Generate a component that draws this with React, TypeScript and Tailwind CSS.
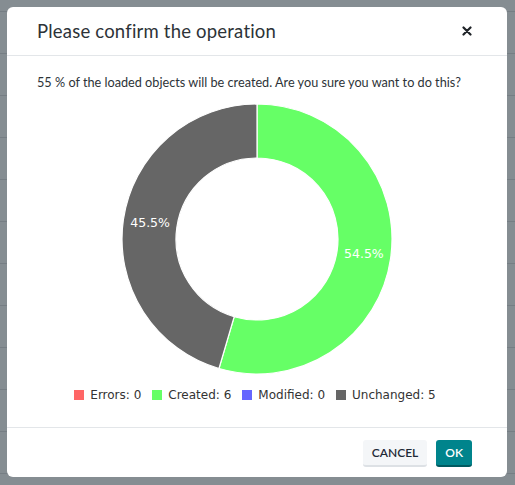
import React from 'react';

const slices = [
  { label: 'Errors', value: 0, color: '#ff6666' },
  { label: 'Created', value: 6, color: '#66ff66' },
  { label: 'Modified', value: 0, color: '#6666ff' },
  { label: 'Unchanged', value: 5, color: '#666666' },
];

function arcPath(cx: number, cy: number, r1: number, r2: number, a0: number, a1: number) {
  const pt = (r: number, a: number) => [cx + r * Math.sin(a), cy - r * Math.cos(a)];
  const large = a1 - a0 > Math.PI ? 1 : 0;
  const [x0, y0] = pt(r2, a0);
  const [x1, y1] = pt(r2, a1);
  const [x2, y2] = pt(r1, a1);
  const [x3, y3] = pt(r1, a0);
  return `M${x0} ${y0} A${r2} ${r2} 0 ${large} 1 ${x1} ${y1} L${x2} ${y2} A${r1} ${r1} 0 ${large} 0 ${x3} ${y3} Z`;
}

function Donut() {
  const total = slices.reduce((s, d) => s + d.value, 0);
  const cx = 136;
  const cy = 136;
  let a = 0;
  const parts = slices
    .filter(d => d.value > 0)
    .map(d => {
      const a0 = a;
      const a1 = a + (d.value / total) * Math.PI * 2;
      a = a1;
      const mid = (a0 + a1) / 2;
      return {
        ...d,
        path: arcPath(cx, cy, 81, 135, a0, a1),
        lx: cx + 108 * Math.sin(mid),
        ly: cy - 108 * Math.cos(mid),
        pct: ((d.value / total) * 100).toFixed(1) + '%',
      };
    });

  return (
    <svg width="272" height="272" viewBox="0 0 272 272">
      {parts.map(p => (
        <path key={p.label} d={p.path} fill={p.color} stroke="#fff" strokeWidth="1.2" />
      ))}
      {parts.map(p => (
        <text
          key={p.label + 't'}
          x={p.lx}
          y={p.ly}
          fill="#fff"
          fontSize="12.5"
          textAnchor="middle"
          dominantBaseline="middle"
          style={{ fontFamily: '"DejaVu Sans", sans-serif' }}
        >
          {p.pct}
        </text>
      ))}
    </svg>
  );
}

export default function App() {
  return (
    <div className="relative w-[515px] h-[485px] overflow-hidden bg-[#858d92]">
      <div className="flex flex-col pt-[11px]">
        {Array.from({ length: 12 }).map((_, i) => (
          <div key={i} className="h-[42px] border-t border-[#767e84]" />
        ))}
      </div>

      <div className="absolute left-[7px] top-[7px] w-[500px] h-[470px] bg-white rounded-[6px] flex flex-col font-['Lato',sans-serif] text-[#2d3338]">
        <div className="h-[49px] flex items-center justify-between pl-[30px] pr-[35px] border-b border-[#e3e6e9]">
          <h2 className="text-[18.5px] tracking-[0.2px] text-[#2d3338] pt-[2px]">Please confirm the operation</h2>
          <svg width="10" height="10" viewBox="0 0 10 10">
            <path d="M1.5 1.5 L8.5 8.5 M8.5 1.5 L1.5 8.5" stroke="#1f2328" strokeWidth="2.2" strokeLinecap="round" />
          </svg>
        </div>

        <div className="flex-1 flex flex-col px-[30px] pt-[18px]">
          <p className="text-[12.7px] leading-[16px] text-[#2d3338]">
            55 % of the loaded objects will be created. Are you sure you want to do this?
          </p>
          <div className="flex justify-center mt-[13px]">
            <Donut />
          </div>
          <div className="flex justify-center items-center gap-[11px] mt-[11px] pr-[4px] font-['DejaVu_Sans',sans-serif] text-[12px] text-[#333]">
            {slices.map(s => (
              <div key={s.label} className="flex items-center gap-[6px]">
                <span className="w-[10px] h-[10px]" style={{ backgroundColor: s.color }} />
                <span>
                  {s.label}: {s.value}
                </span>
              </div>
            ))}
          </div>
        </div>

        <div className="h-[50px] border-t border-[#e3e6e9] flex items-center justify-end gap-[9px] pr-[35px] pt-[2px]">
          <button className="h-[27px] px-[9px] rounded-[3px] bg-[#f4f6f8] border-b-2 border-[#dde1e5] text-[12px] font-semibold text-[#1f2a36]">
            CANCEL
          </button>
          <button className="h-[27px] px-[9px] rounded-[3px] bg-[#00848c] border-b-2 border-[#005a60] text-[12px] font-semibold text-white">
            OK
          </button>
        </div>
      </div>
    </div>
  );
}
